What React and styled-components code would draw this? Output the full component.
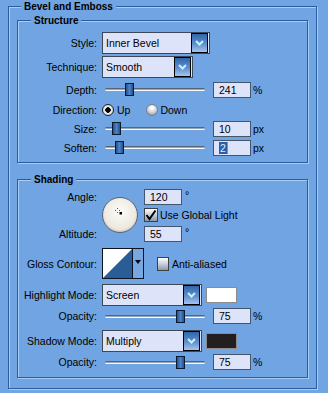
import React from 'react';
import styled, { createGlobalStyle } from 'styled-components';

const BG = '#70a4e2';
const LINE = '#2c5c9c';
const LIGHT = '#a8ccf4';
const FIELD = '#dde3f8';

const GlobalStyle = createGlobalStyle`
  html, body {
    margin: 0;
    padding: 0;
    background: ${BG};
  }
  body {
    font-family: 'Liberation Sans', Arial, sans-serif;
    font-size: 10.5px;
    color: #000;
    width: 328px;
    height: 393px;
    overflow: hidden;
  }
`;

const Page = styled.div`
  padding: 6px 11px 0 8px;
`;

const Box = styled.div`
  margin-top: ${({ $mt }) => $mt || 0}px;
  padding: ${({ $pad }) => $pad || '0'};
  border: 1px solid ${LINE};
  box-shadow: inset 1px 1px 0 ${LIGHT}, 1px 1px 0 ${LIGHT};
`;

const Title = styled.div`
  width: fit-content;
  margin: -7px 0 0 ${({ $ml }) => $ml}px;
  padding: 0 3px;
  height: 13px;
  line-height: 13px;
  font-size: 10px;
  font-weight: bold;
  background: ${BG};
`;

const Body = styled.div`
  padding: ${({ $pad }) => $pad};
`;

const Row = styled.div`
  display: flex;
  align-items: center;
  height: ${({ $h }) => $h}px;
  margin-top: ${({ $mt }) => $mt || 0}px;
  white-space: nowrap;
`;

const Label = styled.div`
  width: 79px;
  flex: none;
  margin-right: 5px;
  text-align: right;
  white-space: nowrap;
`;

const Select = styled.div`
  width: ${({ $w }) => $w}px;
  height: 22px;
  box-sizing: border-box;
  flex: none;
  display: flex;
  align-items: center;
  justify-content: space-between;
  padding-left: 3px;
  border: 1px solid #3c4858;
  background: ${FIELD};
`;

const DropBtn = styled.div`
  width: 17px;
  height: 20px;
  box-sizing: border-box;
  margin-right: 1px;
  display: flex;
  align-items: center;
  justify-content: center;
  border: 1px solid #000;
  background: linear-gradient(#2f66ab, #5f8fcc 55%, #a6c4ec);
`;

const Track = styled.div`
  position: relative;
  flex: none;
  width: 100px;
  height: 13px;
  margin-left: 3px;
  &::before {
    content: '';
    position: absolute;
    left: 0;
    right: 0;
    top: 5px;
    height: 3px;
    border-radius: 2px;
    background: linear-gradient(#56667a 0 1px, #9aa6b6 1px 2px, #f6f8fc 2px);
  }
`;

const Thumb = styled.div`
  position: absolute;
  top: 0;
  width: 9px;
  height: 13px;
  box-sizing: border-box;
  border: 1px solid #0a1830;
  background: linear-gradient(90deg, #22508e, #4e84c6 50%, #22508e);
`;

const NumBox = styled.div`
  width: 38px;
  height: 16px;
  box-sizing: border-box;
  flex: none;
  margin-left: ${({ $ml }) => ($ml === undefined ? 8 : $ml)}px;
  padding-left: 5px;
  display: flex;
  align-items: center;
  border: 1px solid #45556b;
  background: ${FIELD};
`;

const Unit = styled.span`
  margin-left: ${({ $ml }) => $ml || 2}px;
  align-self: ${({ $top }) => ($top ? 'flex-start' : 'center')};
`;

const Selected = styled.span`
  background: #2c5ea8;
  color: #e4eaff;
  line-height: 12px;
  padding: 0 1px;
`;

const Caret = styled.span`
  width: 1px;
  height: 12px;
  background: #d8801e;
`;

const Radio = styled.span`
  width: 12px;
  height: 12px;
  box-sizing: border-box;
  flex: none;
  border-radius: 50%;
  margin-left: ${({ $ml }) => $ml || 0}px;
  border: 1px solid ${({ $on }) => ($on ? '#222' : '#7a808a')};
  background: ${({ $on }) =>
    $on
      ? 'radial-gradient(circle, #000 0 2.5px, #f4f4f4 3px, #b8bcc4 100%)'
      : 'radial-gradient(circle at 50% 30%, #fff 0 1px, #c4c8d0 60%, #6a7078)'};
`;

const RadioText = styled.span`
  margin-left: ${({ $ml }) => $ml}px;
`;

const Check = styled.span`
  width: ${({ $w }) => $w || 14}px;
  height: 14px;
  box-sizing: border-box;
  flex: none;
  margin-left: ${({ $ml }) => $ml || 0}px;
  display: flex;
  align-items: center;
  justify-content: center;
  border: 1px solid #3a3f48;
  background: linear-gradient(#fdfdfe, #c8ced8 50%, #8c98aa);
`;

const CheckText = styled.span`
  margin-left: ${({ $ml }) => $ml}px;
`;

const AngleGrid = styled.div`
  display: grid;
  grid-template-columns: 84px 42px auto;
  grid-template-rows: 18px 18px 20px;
  align-items: center;
  margin-top: 1px;
  white-space: nowrap;
`;

const GridCell = styled.div`
  grid-column: ${({ $col }) => $col};
  grid-row: ${({ $row }) => $row};
  display: flex;
  align-items: center;
`;

const Dial = styled.div`
  grid-column: 2;
  grid-row: 1 / 4;
  align-self: start;
  margin-top: 9px;
  width: 36px;
  height: 36px;
  box-sizing: border-box;
  border-radius: 50%;
  border: 1px solid #56657a;
  background: radial-gradient(circle at 50% 40%, #fcfbf8, #ebe7de 70%, #d6d2c8);
  box-shadow: inset 0 -1px 2px rgba(0, 0, 0, 0.15);
`;

const Contour = styled.div`
  display: flex;
  flex: none;
  width: 42px;
  height: 31px;
  box-sizing: border-box;
  border: 1px solid #0c1420;
  background: #fff;
`;

const ContourArrow = styled.div`
  flex: 1;
  display: flex;
  justify-content: center;
  padding-top: 11px;
  border-left: 1px solid #0c1420;
  background: #78a8e4;
`;

const Swatch = styled.div`
  width: 31px;
  height: 16px;
  box-sizing: border-box;
  flex: none;
  margin-left: 4px;
  border: 1px solid #8c8c8c;
  background: ${({ $c }) => $c};
`;

const Chevron = () => (
  <svg width="9" height="6" viewBox="0 0 9 6">
    <polyline points="1,1 4.5,4.5 8,1" fill="none" stroke="#c6f2ff" strokeWidth="2" />
  </svg>
);

const Dropdown = ({ width, children }) => (
  <Select $w={width}>
    <span>{children}</span>
    <DropBtn>
      <Chevron />
    </DropBtn>
  </Select>
);

const Slider = ({ pos }) => (
  <Track>
    <Thumb style={{ left: pos }} />
  </Track>
);

const Tick = () => (
  <svg width="12" height="12" viewBox="0 0 12 12">
    <polyline points="1.5,6 4.5,10 10.5,1.5" fill="none" stroke="#000" strokeWidth="2" />
  </svg>
);

const App = () => (
  <>
    <GlobalStyle />
    <Page>
      <Box $pad="0 8px 10px">
        <Title $ml={4}>Bevel and Emboss</Title>

        <Box $mt={7}>
          <Title $ml={13}>Structure</Title>
          <Body $pad="3px 0 4px">
            <Row $h={25}>
              <Label>Style:</Label>
              <Dropdown width={108}>Inner Bevel</Dropdown>
            </Row>
            <Row $h={24}>
              <Label>Technique:</Label>
              <Dropdown width={91}>Smooth</Dropdown>
            </Row>
            <Row $h={21}>
              <Label>Depth:</Label>
              <Slider pos={20} />
              <NumBox>241</NumBox>
              <Unit>%</Unit>
            </Row>
            <Row $h={20}>
              <Label>Direction:</Label>
              <Radio $on />
              <RadioText $ml={3}>Up</RadioText>
              <Radio $ml={16} />
              <RadioText $ml={2}>Down</RadioText>
            </Row>
            <Row $h={17}>
              <Label>Size:</Label>
              <Slider pos={7} />
              <NumBox>10</NumBox>
              <Unit>px</Unit>
            </Row>
            <Row $h={21}>
              <Label>Soften:</Label>
              <Slider pos={10} />
              <NumBox>
                <Selected>2</Selected>
                <Caret />
              </NumBox>
              <Unit>px</Unit>
            </Row>
          </Body>
        </Box>

        <Box $mt={16}>
          <Title $ml={13}>Shading</Title>
          <Body $pad="1px 0 6px">
            <AngleGrid>
              <GridCell $col={1} $row={1}>
                <Label>Angle:</Label>
              </GridCell>
              <GridCell $col={3} $row={1}>
                <NumBox $ml={0}>120</NumBox>
                <Unit $ml={3} $top>°</Unit>
              </GridCell>
              <Dial>
                <svg width="34" height="34" viewBox="0 0 34 34">
                  <g fill="#555">
                    <rect x="14" y="10" width="1" height="1" />
                    <rect x="14" y="14" width="1" height="1" />
                    <rect x="12" y="12" width="1" height="1" />
                    <rect x="16" y="12" width="1" height="1" />
                  </g>
                  <rect x="16.5" y="14" width="2.5" height="2.5" fill="#000" />
                </svg>
              </Dial>
              <GridCell $col={3} $row={2}>
                <Check>
                  <Tick />
                </Check>
                <CheckText $ml={2}>Use Global Light</CheckText>
              </GridCell>
              <GridCell $col={1} $row={3}>
                <Label>Altitude:</Label>
              </GridCell>
              <GridCell $col={3} $row={3}>
                <NumBox $ml={0}>55</NumBox>
                <Unit $ml={3} $top>°</Unit>
              </GridCell>
            </AngleGrid>

            <Row $h={31} $mt={4}>
              <Label>Gloss Contour:</Label>
              <Contour>
                <svg width="29" height="29" viewBox="0 0 29 29">
                  <polygon points="0,29 29,0 29,29" fill="#2a5c98" />
                </svg>
                <ContourArrow>
                  <svg width="6" height="4" viewBox="0 0 6 4">
                    <polygon points="0,0 6,0 3,4" fill="#000" />
                  </svg>
                </ContourArrow>
              </Contour>
              <Check $w={12} $ml={13} />
              <CheckText $ml={3}>Anti-aliased</CheckText>
            </Row>

            <Row $h={24} $mt={4}>
              <Label>Highlight Mode:</Label>
              <Dropdown width={100}>Screen</Dropdown>
              <Swatch $c="#ffffff" />
            </Row>
            <Row $h={18}>
              <Label>Opacity:</Label>
              <Slider pos={71} />
              <NumBox>75</NumBox>
              <Unit>%</Unit>
            </Row>
            <Row $h={24} $mt={4}>
              <Label>Shadow Mode:</Label>
              <Dropdown width={100}>Multiply</Dropdown>
              <Swatch $c="#231f20" />
            </Row>
            <Row $h={18}>
              <Label>Opacity:</Label>
              <Slider pos={71} />
              <NumBox>75</NumBox>
              <Unit>%</Unit>
            </Row>
          </Body>
        </Box>
      </Box>
    </Page>
  </>
);

export default App;
